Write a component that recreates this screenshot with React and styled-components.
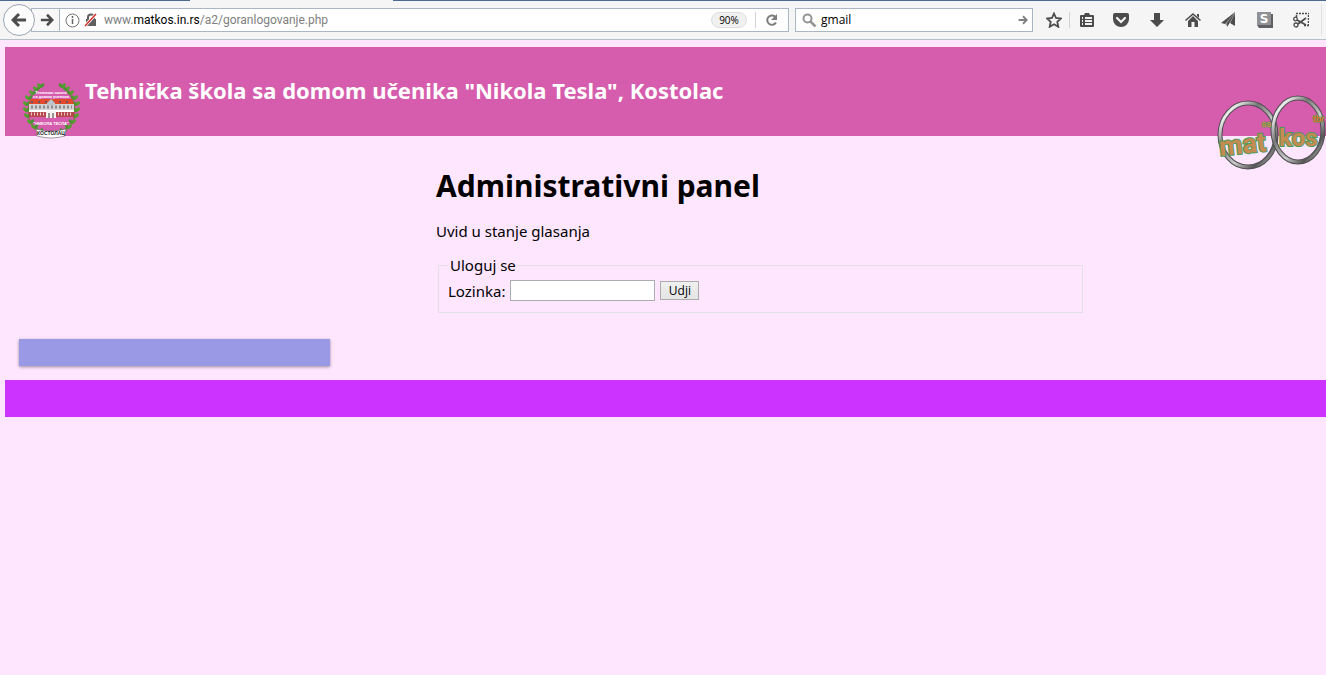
import React from "react";
import styled, { createGlobalStyle } from "styled-components";

const GlobalStyle = createGlobalStyle`
  *, *::before, *::after { box-sizing: border-box; }
  body {
    margin: 0;
    background: #ffe6ff;
    color: #000;
    font: 15px/20px "Noto Sans", "Open Sans", sans-serif;
  }
`;

const TabStrip = styled.div`
  display: flex;
  height: 1px;
  padding-left: 190px;
  background: #4a6a92;
`;

const ActiveTab = styled.div`
  width: 203px;
  background: #f5f5f5;
`;

const Toolbar = styled.header`
  display: flex;
  align-items: center;
  height: 39px;
  padding: 0 4px 0 3px;
  background: #f5f5f5;
  border-bottom: 1px solid #b9c0c8;
  font: 12px/16px "Open Sans", "Noto Sans", sans-serif;
`;

const BackButton = styled.button`
  position: relative;
  flex: none;
  display: grid;
  place-items: center;
  width: 32px;
  height: 32px;
  margin-right: -4px;
  padding: 0;
  border: 1px solid #9ba6b3;
  border-radius: 50%;
  background: #fcfcfc;
`;

const ForwardButton = styled.button`
  flex: none;
  display: grid;
  place-items: center;
  width: 28px;
  height: 22px;
  padding: 0 0 0 2px;
  border: 0;
  border-right: 1px solid #aab6c3;
  background: #f8f8f8;
`;

const AddressField = styled.div`
  flex: 1;
  min-width: 0;
  display: flex;
  align-items: center;
  height: 24px;
  border: 1px solid #aab6c3;
  background: #fff;
`;

const SearchField = styled.form`
  flex: none;
  display: flex;
  align-items: center;
  gap: 4px;
  width: 238px;
  height: 24px;
  margin: 0 6px;
  padding: 0 4px 0 6px;
  border: 1px solid #aab6c3;
  background: #fff;
`;

const SiteInfo = styled.span`
  display: flex;
  align-items: center;
  gap: 4px;
  padding: 0 6px 0 5px;
`;

const Address = styled.span`
  flex: 1;
  color: #808080;
  font-family: Roboto, "Open Sans", sans-serif;
  line-height: 18px;
  white-space: nowrap;
  overflow: hidden;

  b { font-weight: 400; color: #000; }
`;

const Zoom = styled.button`
  width: 36px;
  height: 16px;
  margin-right: 8px;
  padding: 0;
  border: 1px solid #dedede;
  border-radius: 8px;
  background: #f0f0f0;
  color: #000;
  font: 10px/14px "Open Sans", sans-serif;
`;

const Divider = styled.span`
  flex: none;
  width: 1px;
  height: ${(p) => (p.$tall ? 32 : 16)}px;
  margin-left: ${(p) => (p.$tall ? 2 : 0)}px;
  background: ${(p) => (p.$tall ? "#e2e4e6" : "#cfd3d7")};
`;

const PlainButton = styled.button`
  flex: none;
  display: grid;
  place-items: center;
  width: ${(p) => p.$width || 16}px;
  height: 22px;
  padding: 0;
  border: 0;
  background: none;
`;

const SearchInput = styled.input`
  flex: 1;
  min-width: 0;
  padding: 0;
  border: 0;
  outline: 0;
  background: none;
  color: #000;
  font: inherit;
`;

const Tools = styled.nav`
  flex: none;
  display: flex;
  align-items: center;
`;

const Page = styled.div`
  padding: 7px 0 0 5px;
`;

const Banner = styled.div`
  display: flex;
  align-items: flex-start;
  justify-content: space-between;
  height: 89px;
  background: #d65cad;
`;

const School = styled.div`
  display: flex;
  align-items: flex-start;
  gap: 5px;
  padding: 30px 0 0 18px;

  svg { margin-top: 6px; }
`;

const SchoolName = styled.h2`
  margin: 0;
  color: #fff;
  font-size: 22px;
  line-height: 26px;
  font-weight: 700;
  white-space: nowrap;
`;

const Brand = styled.a`
  flex: none;
  height: 76px;
  margin-top: 47px;
`;

const Body = styled.div`
  display: grid;
  grid-template-columns: 311fr 106fr 649fr 241fr;
  padding: 30px 0 14px 14px;
`;

const SideBox = styled.aside`
  align-self: end;
  height: 27px;
  background: #9999e6;
  box-shadow: 0 1px 3px rgba(0, 0, 0, 0.4);
`;

const Main = styled.main`
  grid-column: 3;
  padding-bottom: 53px;
`;

const Title = styled.h1`
  margin: 0 0 15px;
  font-size: 30px;
  line-height: 40px;
  font-weight: 700;
  white-space: nowrap;
`;

const Lead = styled.p`
  margin: 0 0 14px;
`;

const LoginForm = styled.form`
  padding: 0 2px;
`;

const Fieldset = styled.fieldset`
  min-width: 0;
  margin: 0;
  padding: 5px 9px 11px;
  border: 1px solid #e3e0e3;
`;

const Legend = styled.legend`
  padding: 0 2px;
`;

const LoginRow = styled.div`
  display: flex;
  align-items: center;
  gap: 5px;
`;

const Password = styled.input`
  width: 145px;
  height: 21px;
  padding: 1px 3px;
  border: 1px solid #abadb3;
  background: #fff;
`;

const Submit = styled.button`
  width: 39px;
  height: 19px;
  padding: 0;
  border: 1px solid #acacac;
  background: linear-gradient(#f0f0f0, #e4e4e4);
  color: #000;
  font: 12px/16px "Open Sans", sans-serif;
`;

const Footer = styled.footer`
  height: 37px;
  background: #cc33ff;
`;

const ink = "#4c4c4c";

function Arrow({ size = 16, flip = false, color = ink }) {
  return (
    <svg width={size} height={size} viewBox="0 0 16 16" fill="none" stroke={color} strokeWidth="3">
      <path d={flip ? "M1 8h12M8 2l6 6-6 6" : "M15 8H3M8 2L2 8l6 6"} />
    </svg>
  );
}

const toolIcons = {
  Bookmarks: (
    <path
      fill={ink}
      fillRule="evenodd"
      d="M2 3h3l1-2h4l1 2h3q1 0 1 1v10q0 1-1 1H2q-1 0-1-1V4q0-1 1-1zM3 5v2h1V5zM6 5v2h7V5zM3 8v2h1V8zM6 8v2h7V8zM3 11v2h1v-2zM6 11v2h7v-2z"
    />
  ),
  Pocket: (
    <g>
      <path fill={ink} d="M2 1h12q2 0 2 2v4a8 8 0 0 1-16 0V3q0-2 2-2z" />
      <path d="M4 6l4 4 4-4" fill="none" stroke="#f5f5f5" strokeWidth="2.2" strokeLinecap="round" />
    </g>
  ),
  Downloads: <path fill={ink} d="M5 1h6v7h4l-7 7-7-7h4z" />,
  Home: (
    <g fill={ink}>
      <path d="M8 1l8 7-1 1-7-6-7 6-1-1z" />
      <path d="M8 4l5 5v6H9.500v-5h-3v5H3V9z" />
      <path d="M12 2h2v4l-2-2z" />
    </g>
  ),
  Send: (
    <g fill={ink}>
      <path d="M14 0L0 11l4 1z" />
      <path d="M14 0L6 11v4l2-3z" />
      <path d="M14 2v12l-5-3z" />
      <path d="M14 0v5L5 14l-1-3z" fillOpacity="0.5" />
    </g>
  ),
  Stylish: (
    <g>
      <path fill="#5f6063" d="M2 2h14v14H2L0 13z" />
      <path fill="#909195" d="M0 0h14v13H0z" />
      <text x="7" y="11" textAnchor="middle" fill="#fff" fontFamily="DejaVu Sans, sans-serif" fontWeight="700" fontSize="12">S</text>
    </g>
  ),
  Screenshot: (
    <g fill="none" stroke={ink}>
      <path d="M3 1.500h13M3.500 3v3M15.500 3v11M11 13.500h5" strokeWidth="1.500" strokeDasharray="2 1" />
      <path d="M4 8l9 5M5 12l8-6" strokeWidth="1.800" />
      <circle cx="2.500" cy="7" r="1.800" strokeWidth="1.300" />
      <circle cx="3" cy="13" r="2" strokeWidth="1.300" />
    </g>
  ),
};

function Laurel() {
  const leaves = [
    [17, 49], [12, 45], [8, 40], [5, 34], [4, 28], [4, 22], [6, 16], [10, 11], [14, 7], [18, 4],
  ];
  return (
    <g>
      <path d="M20 50Q5 43 5 28T18 4" fill="none" stroke="#9a5f55" />
      {leaves.map(([x, y]) => (
        <g key={y}>
          <ellipse cx={x - 2} cy={y} rx="3" ry="1.600" fill="#57a030" transform={`rotate(40 ${x} ${y})`} />
          <ellipse cx={x + 2} cy={y} rx="2.500" ry="1.500" fill="#4a9330" transform={`rotate(-50 ${x} ${y})`} />
        </g>
      ))}
    </g>
  );
}

function Crest() {
  return (
    <svg width="57" height="56" viewBox="0 0 57 56" role="img" aria-label="Grb škole">
      <Laurel />
      <g transform="translate(57 0) scale(-1 1)"><Laurel /></g>
      <g fill="#fff" fontFamily="Liberation Sans, sans-serif" fontWeight="700" textAnchor="middle">
        <text x="28" y="11" fontSize="4">Техничка школа</text>
        <text x="28" y="15" fontSize="4">са домом ученика</text>
        <text x="28" y="42" fontSize="4">"НИКОЛА ТЕСЛА"</text>
      </g>
      <path d="M8 16h41l2 5H6z" fill="#e2492a" />
      <path d="M6 21h45v8H6z" fill="#d5d2d2" />
      <path d="M6 29h45v5H6z" fill="#b8474d" />
      <path d="M8 19h41" stroke="#6d5560" strokeWidth="2" strokeDasharray="2 5" />
      <path d="M8 24h41" stroke="#8b8b95" strokeWidth="3" strokeDasharray="2 2" />
      <path d="M8 31h41" stroke="#e8c9cc" strokeWidth="3" strokeDasharray="1 2" />
      <path d="M6 28h45" stroke="#fff" strokeWidth="2" />
      <path d="M24 20l4-4 4 4v2h-8z" fill="#b9c4cc" />
      <path d="M23 28h10v7H23z" fill="#f4f1f1" />
      <path d="M25 30h2v5h-2zM29 30h2v5h-2z" fill="#9a8f92" />
      <path d="M13 46q15 4 30 0l-1 7q-14 4-28 0z" fill="#fff" stroke="#444" strokeWidth="0.500" />
      <text x="28" y="52" textAnchor="middle" fontFamily="Liberation Sans, sans-serif" fontWeight="700" fontSize="5" fill="#222">КОСТОЛАЦ</text>
    </svg>
  );
}

function Rings() {
  return (
    <svg width="110" height="76" viewBox="0 0 110 76" role="img" aria-label="matkos">
      <defs>
        <linearGradient id="steel" x1="0" y1="0" x2="1" y2="1">
          <stop offset="0" stopColor="#555" />
          <stop offset="0.150" stopColor="#eee" />
          <stop offset="0.350" stopColor="#777" />
          <stop offset="0.600" stopColor="#ccc" />
          <stop offset="0.800" stopColor="#555" />
          <stop offset="1" stopColor="#ddd" />
        </linearGradient>
      </defs>
      <g fill="none">
        <ellipse cx="32" cy="41" rx="28" ry="32" stroke="#505050" strokeWidth="5" />
        <ellipse cx="32" cy="41" rx="28" ry="32" stroke="url(#steel)" strokeWidth="3" />
        <ellipse cx="82" cy="36" rx="25" ry="32" stroke="#505050" strokeWidth="5" />
        <ellipse cx="82" cy="36" rx="25" ry="32" stroke="url(#steel)" strokeWidth="3" />
      </g>
      <g fontFamily="Roboto, Liberation Sans, sans-serif" fontWeight="700" fill="#c68b52" stroke="#4b9b57" strokeWidth="2" paintOrder="stroke">
        <text x="4" y="62" fontSize="27" transform="rotate(-6 4 62)">mat</text>
        <text x="63" y="52" fontSize="24">kos</text>
        <text x="46" y="33" fontSize="9" strokeWidth="1">sa</text>
        <text x="97" y="28" fontSize="9" strokeWidth="1" fill="#e0702f">tbr</text>
      </g>
    </svg>
  );
}

export default function App() {
  return (
    <>
      <GlobalStyle />
      <TabStrip><ActiveTab /></TabStrip>
      <Toolbar>
        <BackButton aria-label="Back"><Arrow size={16} /></BackButton>
        <AddressField>
          <ForwardButton aria-label="Forward"><Arrow size={14} flip /></ForwardButton>
          <SiteInfo>
            <svg width="15" height="15" viewBox="0 0 15 15">
              <circle cx="7.500" cy="7.500" r="6.500" fill="none" stroke="#737373" />
              <path d="M7.500 3v2M7.500 6v5" stroke="#666" strokeWidth="1.500" />
            </svg>
            <svg width="14" height="14" viewBox="0 0 14 14">
              <path d="M2 6h10v7H2z" fill="#606060" />
              <path d="M4 6V4a3 2.500 0 0 1 6 0v2" fill="none" stroke="#606060" strokeWidth="2" />
              <path d="M1 13L12 1" stroke="#fff" strokeWidth="3" />
              <path d="M1 13L12 1" stroke="#d8342f" strokeWidth="1.500" />
            </svg>
          </SiteInfo>
          <Address>www.<b>matkos.in.rs</b>/a2/goranlogovanje.php</Address>
          <Zoom>90%</Zoom>
          <Divider />
          <PlainButton $width={32} aria-label="Reload">
            <svg width="14" height="14" viewBox="0 0 14 14">
              <path d="M11 9.500A4.700 4.700 0 1 1 10 3.500" fill="none" stroke="#7d7d7d" strokeWidth="2" />
              <path d="M12 1v6H6z" fill="#7d7d7d" />
            </svg>
          </PlainButton>
        </AddressField>
        <SearchField>
          <svg width="15" height="15" viewBox="0 0 15 15" fill="none" stroke="#949494">
            <circle cx="5.500" cy="5.500" r="4" strokeWidth="2" />
            <path d="M8.500 8.500l5 5" strokeWidth="2.500" />
          </svg>
          <SearchInput aria-label="Search" defaultValue="gmail" />
          <PlainButton $width={10} aria-label="Go"><Arrow size={10} flip color="#808080" /></PlainButton>
        </SearchField>
        <Tools>
          <PlainButton $width={30} aria-label="Bookmark this page">
            <svg width="16" height="16" viewBox="0 0 16 16">
              <path d="M8 1.500l2 4.500 5 .5-3.700 3.300 1 5L8 12.300l-4.300 2.500 1-5L1 6.500 6 6z" fill="none" stroke={ink} strokeWidth="1.800" />
            </svg>
          </PlainButton>
          <Divider />
          {Object.entries(toolIcons).map(([name, icon]) => (
            <PlainButton key={name} $width={name === "Bookmarks" ? 33 : 36} aria-label={name}>
              <svg width="16" height="16" viewBox="0 0 16 16">{icon}</svg>
            </PlainButton>
          ))}
          <Divider $tall />
        </Tools>
      </Toolbar>
      <Page>
        <Banner>
          <School>
            <Crest />
            <SchoolName>Tehnička škola sa domom učenika "Nikola Tesla", Kostolac</SchoolName>
          </School>
          <Brand href="#"><Rings /></Brand>
        </Banner>
        <Body>
          <SideBox />
          <Main>
            <Title>Administrativni panel</Title>
            <Lead>Uvid u stanje glasanja</Lead>
            <LoginForm>
              <Fieldset>
                <Legend>Uloguj se</Legend>
                <LoginRow>
                  <label htmlFor="lozinka">Lozinka:</label>
                  <Password id="lozinka" type="password" />
                  <Submit type="button">Udji</Submit>
                </LoginRow>
              </Fieldset>
            </LoginForm>
          </Main>
        </Body>
        <Footer />
      </Page>
    </>
  );
}
